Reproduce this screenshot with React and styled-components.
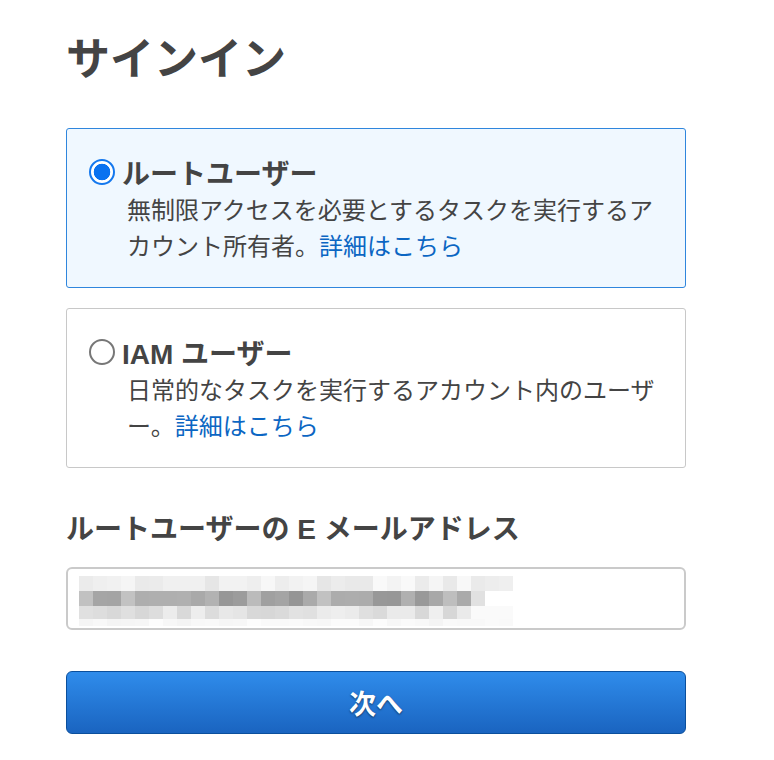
import React from "react";
import styled, { createGlobalStyle } from "styled-components";

const GlobalStyle = createGlobalStyle`
  body {
    margin: 0;
    background: #fff;
    font-family: "Liberation Sans", "Noto Sans CJK JP", sans-serif;
    color: #444;
  }
`;

const Page = styled.div`
  width: 620px;
  padding: 34px 0 0 66px;
`;

const Title = styled.h1`
  margin: 0;
  font-size: 44px;
  line-height: 52px;
  font-weight: 700;
  color: #444;
`;

const Options = styled.div`
  margin-top: 42px;
  display: flex;
  flex-direction: column;
  gap: 20px;
`;

const Card = styled.label`
  display: block;
  padding: 23px 24px 22px 22px;
  border: ${p => (p.$active ? "1.5px solid #2f86dd" : "1.5px solid #c8c8c8")};
  background: ${p => (p.$active ? "#f0f8ff" : "#fff")};
  border-radius: 3px;
  cursor: pointer;
`;

const CardHead = styled.div`
  display: flex;
  align-items: center;
  gap: 7px;
  height: 40px;
`;

const Radio = styled.span`
  box-sizing: border-box;
  width: 26px;
  height: 26px;
  border-radius: 50%;
  flex-shrink: 0;
  border: ${p => (p.$checked ? "2.5px solid #1478ee" : "2px solid #777")};
  background: ${p =>
    p.$checked
      ? "radial-gradient(circle, #0a72f0 0 8px, #fff 8.6px)"
      : "#fff"};
`;

const CardTitle = styled.span`
  font-size: 28px;
  font-weight: 700;
  color: #444;
`;

const CardText = styled.p`
  margin: 1px 0 0 38px;
  font-size: 24px;
  line-height: 36px;
  color: #444;
`;

const Link = styled.a`
  color: #0b66c3;
  text-decoration: none;
`;

const FieldLabel = styled.div`
  margin-top: 44px;
  font-size: 28px;
  line-height: 36px;
  font-weight: 700;
  color: #444;
`;

const Input = styled.div`
  box-sizing: border-box;
  margin-top: 19px;
  height: 63px;
  border: 2px solid #cacaca;
  border-radius: 6px;
  padding: 7px 0 0 11px;
  background: #fff;
`;

const Mosaic = styled.div`
  display: grid;
  grid-template-columns: repeat(31, 14px);
  grid-template-rows: 15px 15px 13px 7px;
`;

const Cell = styled.span`
  display: block;
`;

const Button = styled.button`
  box-sizing: border-box;
  display: block;
  width: 100%;
  margin-top: 41px;
  height: 63px;
  border: 1px solid #0b4f9c;
  border-radius: 6px;
  background: linear-gradient(#2f8ceb, #1a64c0);
  color: #fff;
  font-family: inherit;
  font-size: 27px;
  font-weight: 700;
  text-shadow: 0 1px 2px rgba(0, 0, 0, 0.55);
  cursor: pointer;
`;

// blurred e-mail address, as a grey mosaic
const rowBase = [240, 172, 226, 248];
const rowSpread = [20, 50, 26, 8];
const cells = [];
for (let r = 0; r < 4; r++) {
  for (let c = 0; c < 31; c++) {
    const n = Math.abs(Math.sin((c + 1) * 12.9898 + (r + 1) * 78.233) * 43758.5453) % 1;
    let v = rowBase[r] - rowSpread[r] / 2 + n * rowSpread[r];
    if (r === 1 && c > 28) v = 255;
    if (r === 1 && c === 28) v = 225;
    if (r === 2 && c > 27) v = 250;
    v = Math.min(255, Math.round(v));
    cells.push(`rgb(${v},${v},${v})`);
  }
}

const App = () => {
  return (
    <Page>
      <GlobalStyle />
      <Title>サインイン</Title>
      <Options>
        <Card $active>
          <CardHead>
            <Radio $checked />
            <CardTitle>ルートユーザー</CardTitle>
          </CardHead>
          <CardText>
            無制限アクセスを必要とするタスクを実行するアカウント所有者。<Link href="#">詳細はこちら</Link>
          </CardText>
        </Card>
        <Card>
          <CardHead>
            <Radio />
            <CardTitle>IAM ユーザー</CardTitle>
          </CardHead>
          <CardText>
            日常的なタスクを実行するアカウント内のユーザー。<Link href="#">詳細はこちら</Link>
          </CardText>
        </Card>
      </Options>
      <FieldLabel>ルートユーザーの E メールアドレス</FieldLabel>
      <Input>
        <Mosaic>
          {cells.map((bg, i) => (
            <Cell key={i} style={{ background: bg }} />
          ))}
        </Mosaic>
      </Input>
      <Button>次へ</Button>
    </Page>
  );
};

export default App;
